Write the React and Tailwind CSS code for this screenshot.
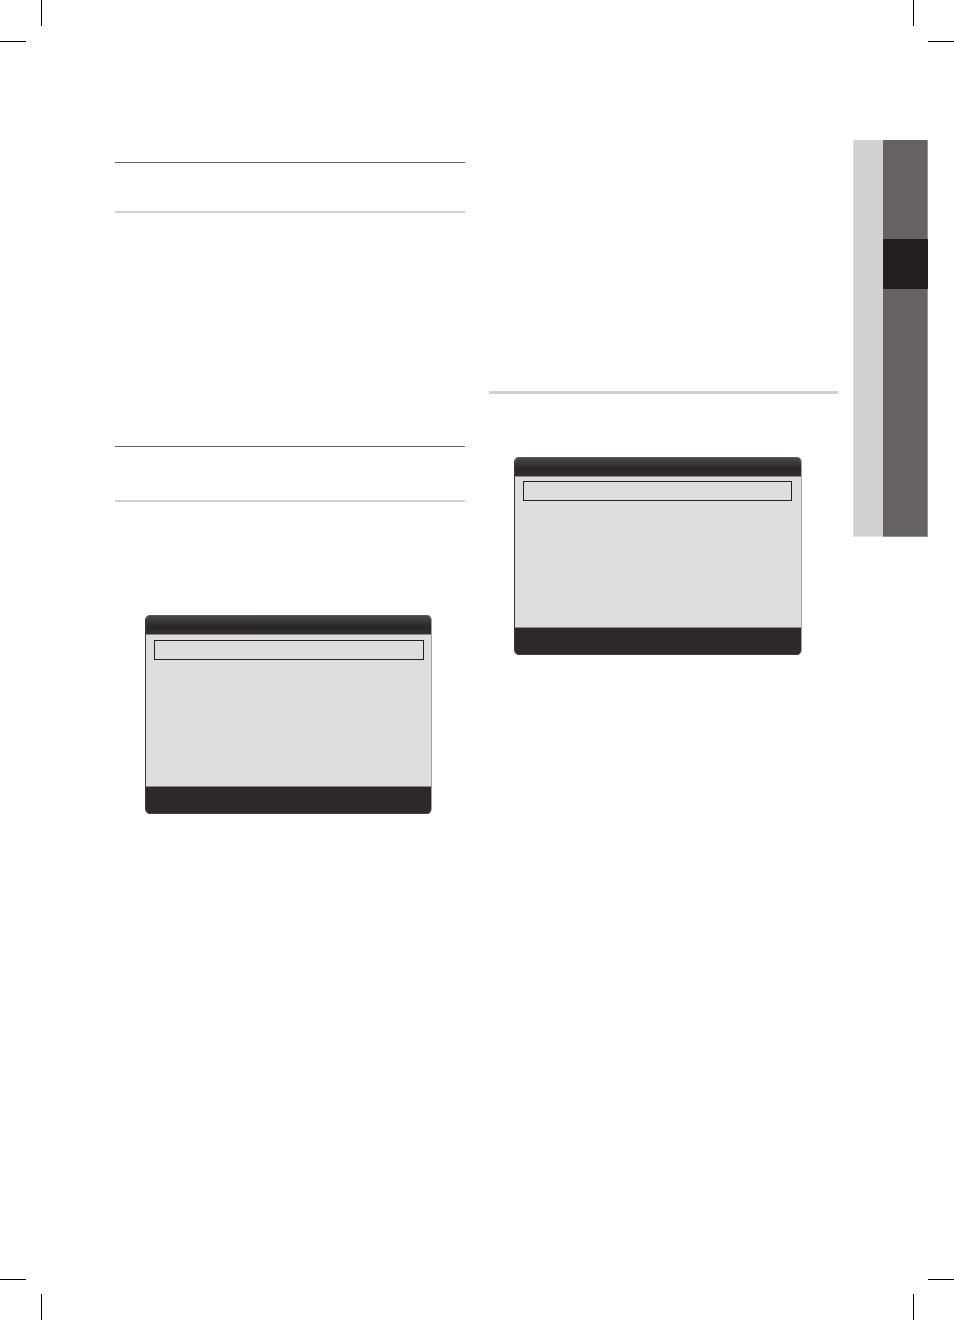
import React from 'react';
import clsx from 'clsx';

// Printer's trim marks, one per page corner
const CropMark = ({ width, height, lines }) => (
  <svg width={width} height={height} shapeRendering="crispEdges" fill="#000" aria-hidden="true">
    {lines.map(([x, y, w, h]) => (
      <rect key={`${x}-${y}`} x={x} y={y} width={w} height={h} />
    ))}
  </svg>
);

const Section = ({ className }) => (
  <section className={clsx('border-t border-[#646263] border-b-2 border-b-[#d1d1d1]', className)} />
);

// On-screen menu: title bar, selected row and footer bar
const MenuScreen = ({ className, rowClassName }) => (
  <div
    className={clsx(
      'flex flex-col overflow-hidden rounded-[5px] border-l border-r border-l-[#393637] border-r-[#a3a2a2] bg-[#dedede]',
      className
    )}
  >
    <div className="h-5 shrink-0 border-t border-b border-t-[#5b5959] border-b-[#8b8989] bg-linear-to-b from-[#4b494a] via-[#2a2627] via-60% to-[#343031]" />
    <div className={clsx('h-5 border border-[#231f20]', rowClassName)} />
    <div className="flex-1" />
    <div className="h-7 shrink-0 border-t border-b border-t-[#8b8586] border-b-[#433f40] bg-[#2d292a]" />
  </div>
);

const SideTabs = () => (
  <aside className="mt-[98px] ml-[15px] flex h-[397px] w-[75px] shrink-0">
    <div className="w-[30px] border-b border-l border-[#e3e3e3] bg-[#d1d1d1]" />
    <div className="flex w-[45px] flex-col">
      <div className="h-[99px] border-r border-[#949293] bg-[#656263]" />
      <div className="h-[50px] bg-[#231f20]" />
      <div className="flex-1 border-r border-b border-[#949293] bg-[#656263]" />
    </div>
  </aside>
);

export default function App() {
  return (
    <div className="flex min-h-screen flex-col bg-white">
      <header className="flex justify-between">
        <CropMark width={42} height={42} lines={[[41, 0, 1, 26], [0, 41, 26, 1]]} />
        <CropMark width={41} height={42} lines={[[0, 0, 1, 26], [15, 41, 26, 1]]} />
      </header>

      <main className="flex flex-1 items-start pr-[26px] pl-[115px]">
        <div className="grow basis-[350px] pt-[120px]">
          <Section className="h-[51px]" />
          <Section className="mt-[233px] h-14" />
          <MenuScreen className="mt-[113px] mr-[33px] ml-[30px] h-[199px]" rowClassName="mt-[5px] mr-[7px] ml-2" />
        </div>

        <div className="ml-6 grow basis-[349px] pt-[349px]">
          <hr className="border-t-3 border-[#d1d1d1]" />
          <MenuScreen className="mt-[63px] mr-9 ml-[25px] h-[198px]" rowClassName="mt-1 mr-[9px] ml-2" />
        </div>

        <SideTabs />
      </main>

      <footer className="flex justify-between">
        <CropMark width={42} height={41} lines={[[0, 0, 26, 1], [41, 15, 1, 26]]} />
        <CropMark width={41} height={41} lines={[[15, 0, 26, 1], [0, 15, 1, 26]]} />
      </footer>
    </div>
  );
}
